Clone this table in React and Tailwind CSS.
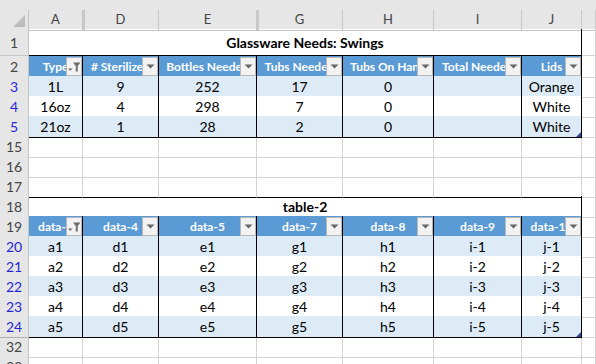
import React from 'react'

const GRID = 'grid grid-cols-[29px_54px_76px_98px_86px_91px_88px_60px_1fr]'

const letters = ['A', 'D', 'E', 'G', 'H', 'I', 'J', '']

const topHead = ['Type', '# Sterilized', 'Bottles Needed', 'Tubs Needed', 'Tubs On Hand', 'Total Needed', 'Lids']
const topRows = [
  { n: 3, cells: ['1L', '9', '252', '17', '0', '', 'Orange'] },
  { n: 4, cells: ['16oz', '4', '298', '7', '0', '', 'White'] },
  { n: 5, cells: ['21oz', '1', '28', '2', '0', '', 'White'] },
]

const bottomHead = ['data-1', 'data-4', 'data-5', 'data-7', 'data-8', 'data-9', 'data-10']
const bottomRows = [1, 2, 3, 4, 5].map((i) => ({
  n: 19 + i,
  cells: [`a${i}`, `d${i}`, `e${i}`, `g${i}`, `h${i}`, `i-${i}`, `j-${i}`],
}))

function RowHead({ n, blue, hiddenAbove }) {
  return (
    <div
      className={`flex items-center justify-center bg-[#e6e6e6] border-r border-b border-[#c3c3c3] text-[14px] ${
        blue ? 'text-[#2626d4]' : 'text-[#444]'
      } ${hiddenAbove ? 'shadow-[inset_0_1px_0_0_#e6e6e6,inset_0_2px_0_0_#b0b0b0]' : ''}`}
    >
      {n}
    </div>
  )
}

function DropButton({ filtered }) {
  return (
    <span className="absolute right-0 top-[1px] bottom-[1px] w-[16px] bg-[#f2f2f2] border border-[#b8b8b8] flex items-center justify-center">
      {filtered ? (
        <svg width="14" height="15" viewBox="0 0 14 15">
          <path d="M1 9.5h4.5l-2.25 2.5z" fill="#6a6a6a" />
          <path d="M6 3.5h7.5l-2.8 3.6v5.4H8.8V7.1z" fill="#6a6a6a" />
        </svg>
      ) : (
        <svg width="9" height="5" viewBox="0 0 9 5">
          <path d="M0.5 0.5h8l-4 4z" fill="#666" />
        </svg>
      )}
    </span>
  )
}

function Handle() {
  return (
    <svg className="absolute right-0 bottom-0" width="5" height="5" viewBox="0 0 5 5">
      <path d="M5 0v5H0z" fill="#34479a" />
    </svg>
  )
}

function Blank() {
  return <div className="border-r border-b border-[#d4d4d4]" />
}

function BlankRow({ n, blackBottom, hiddenAbove }) {
  return (
    <div className={`${GRID} h-[20px]`}>
      <RowHead n={n} hiddenAbove={hiddenAbove} />
      {[0, 1, 2, 3, 4, 5, 6].map((i) => (
        <div
          key={i}
          className={`border-r border-b ${blackBottom ? 'border-r-[#d4d4d4] border-b-black' : 'border-[#d4d4d4]'}`}
        />
      ))}
      <Blank />
    </div>
  )
}

function TitleRow({ n, title, tall }) {
  return (
    <div className={`${GRID} ${tall ? 'h-[27px]' : 'h-[20px]'}`}>
      <RowHead n={n} />
      <div className="col-span-7 flex items-center justify-center border-r border-b border-black font-bold text-[14px] text-black">
        {title}
      </div>
      <Blank />
    </div>
  )
}

function HeadRow({ n, heads }) {
  return (
    <div className={`${GRID} h-[20px]`}>
      <RowHead n={n} />
      {heads.map((h, i) => (
        <div
          key={i}
          className="relative flex items-center justify-center overflow-hidden bg-[#5b9bd5] border-r border-b border-black text-white font-bold text-[12px]"
        >
          <span className="shrink-0 whitespace-nowrap">{h}</span>
          <DropButton filtered={i === 0} />
        </div>
      ))}
      <Blank />
    </div>
  )
}

function DataRow({ n, cells, band, last }) {
  return (
    <div className={`${GRID} h-[20px]`}>
      <RowHead n={n} blue />
      {cells.map((c, i) => (
        <div
          key={i}
          className={`relative flex items-center justify-center overflow-hidden whitespace-nowrap border-r border-b border-black text-[14px] text-black ${
            band ? 'bg-[#ddebf7]' : 'bg-white'
          }`}
        >
          {c}
          {last && i === cells.length - 1 && <Handle />}
        </div>
      ))}
      <Blank />
    </div>
  )
}

export default function App() {
  return (
    <div className="w-[596px] h-[364px] overflow-hidden bg-white font-[Lato,sans-serif]">
      {/* column letters */}
      <div className={`${GRID} h-[29px] bg-[#e6e6e6]`}>
        <div className="flex flex-col border-b border-[#c3c3c3]">
          <div className="mt-[10px] flex-1 flex items-end justify-end pr-[3px] pb-[3px] border-r border-[#c3c3c3]">
            <svg width="12" height="12" viewBox="0 0 12 12">
              <path d="M12 0v12H0z" fill="#bdbdbd" />
            </svg>
          </div>
        </div>
        {letters.map((l, i) => (
          <div key={i} className="flex flex-col border-b border-[#c3c3c3]">
            <div
              className={`mt-[10px] flex-1 flex items-center justify-center border-r border-[#c8c8c8] text-[13px] text-[#444] ${
                l === 'D' || l === 'G' ? 'shadow-[inset_2px_0_0_0_#c8c8c8]' : ''
              }`}
            >
              {l}
            </div>
          </div>
        ))}
      </div>

      <TitleRow n={1} title="Glassware Needs: Swings" tall />
      <HeadRow n={2} heads={topHead} />
      {topRows.map((r, i) => (
        <DataRow key={r.n} n={r.n} cells={r.cells} band={i % 2 === 0} last={i === topRows.length - 1} />
      ))}

      <BlankRow n={15} />
      <BlankRow n={16} />
      <BlankRow n={17} blackBottom />

      <TitleRow n={18} title="table-2" />
      <HeadRow n={19} heads={bottomHead} />
      {bottomRows.map((r, i) => (
        <DataRow key={r.n} n={r.n} cells={r.cells} band={i % 2 === 0} last={i === bottomRows.length - 1} />
      ))}

      <BlankRow n={32} hiddenAbove />
      <BlankRow n={33} />
    </div>
  )
}
